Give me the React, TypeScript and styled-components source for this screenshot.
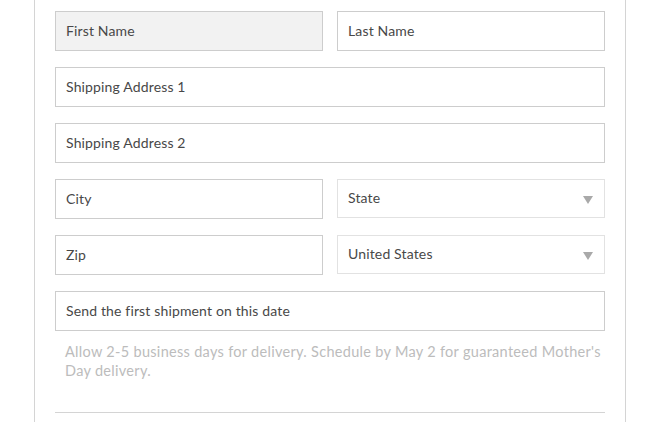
import React from 'react';
import styled, { createGlobalStyle } from 'styled-components';

const GlobalStyle = createGlobalStyle`
  html, body {
    margin: 0;
    padding: 0;
    background: #fff;
    font-family: Lato, "Open Sans", sans-serif;
  }
`;

const Panel = styled.div`
  margin-left: 34px;
  width: 592px;
  height: 422px;
  box-sizing: border-box;
  border-left: 1px solid #d4d4d4;
  border-right: 1px solid #d4d4d4;
  padding: 11px 20px 0 20px;
  display: flex;
  flex-direction: column;
  gap: 16px;
  overflow: hidden;
`;

const Row = styled.div<{ cols?: number }>`
  display: grid;
  grid-template-columns: ${(p) => (p.cols === 1 ? '1fr' : '268px 268px')};
  column-gap: 14px;
`;

const Input = styled.input<{ focused?: boolean }>`
  height: 40px;
  box-sizing: border-box;
  border: 1px solid #cdcdcd;
  border-radius: 0;
  background: ${(p) => (p.focused ? '#f2f2f2' : '#fff')};
  padding: 0 10px 1px 10px;
  font-family: Lato, "Open Sans", sans-serif;
  font-size: 14px;
  letter-spacing: 0.15px;
  color: #3a3a3a;
  caret-color: #333;
  outline: none;
  width: 100%;
  &::placeholder {
    color: #484848;
    opacity: 1;
  }
`;

const SelectBox = styled.div`
  height: 39px;
  box-sizing: border-box;
  border: 1px solid #e2e2e2;
  padding: 0 11px 3px 10px;
  display: flex;
  align-items: center;
  justify-content: space-between;
  font-size: 14px;
  letter-spacing: 0.15px;
  color: #484848;
`;

const Arrow = styled.span`
  width: 0;
  height: 0;
  border-left: 5.5px solid transparent;
  border-right: 5.5px solid transparent;
  border-top: 8px solid #a9a9a9;
  margin-top: 5px;
`;

const Help = styled.p`
  margin: -5px 0 0 10px;
  font-size: 14.5px;
  line-height: 19px;
  color: #bcbcbc;
  letter-spacing: 0.3px;
`;

const Divider = styled.hr`
  margin: 16px 0 0 0;
  border: none;
  border-top: 1px solid #d4d4d4;
`;

function Select({ label }: { label: string }) {
  return (
    <SelectBox>
      <span>{label}</span>
      <Arrow />
    </SelectBox>
  );
}

export default function App() {
  return (
    <>
      <GlobalStyle />
      <Panel>
        <Row>
          <Input focused autoFocus placeholder="First Name" />
          <Input placeholder="Last Name" />
        </Row>
        <Row cols={1}>
          <Input placeholder="Shipping Address 1" />
        </Row>
        <Row cols={1}>
          <Input placeholder="Shipping Address 2" />
        </Row>
        <Row>
          <Input placeholder="City" />
          <Select label="State" />
        </Row>
        <Row>
          <Input placeholder="Zip" />
          <Select label="United States" />
        </Row>
        <Row cols={1}>
          <Input placeholder="Send the first shipment on this date" />
        </Row>
        <Help>
          Allow 2-5 business days for delivery. Schedule by May 2 for guaranteed Mother's Day delivery.
        </Help>
        <Divider />
      </Panel>
    </>
  );
}
